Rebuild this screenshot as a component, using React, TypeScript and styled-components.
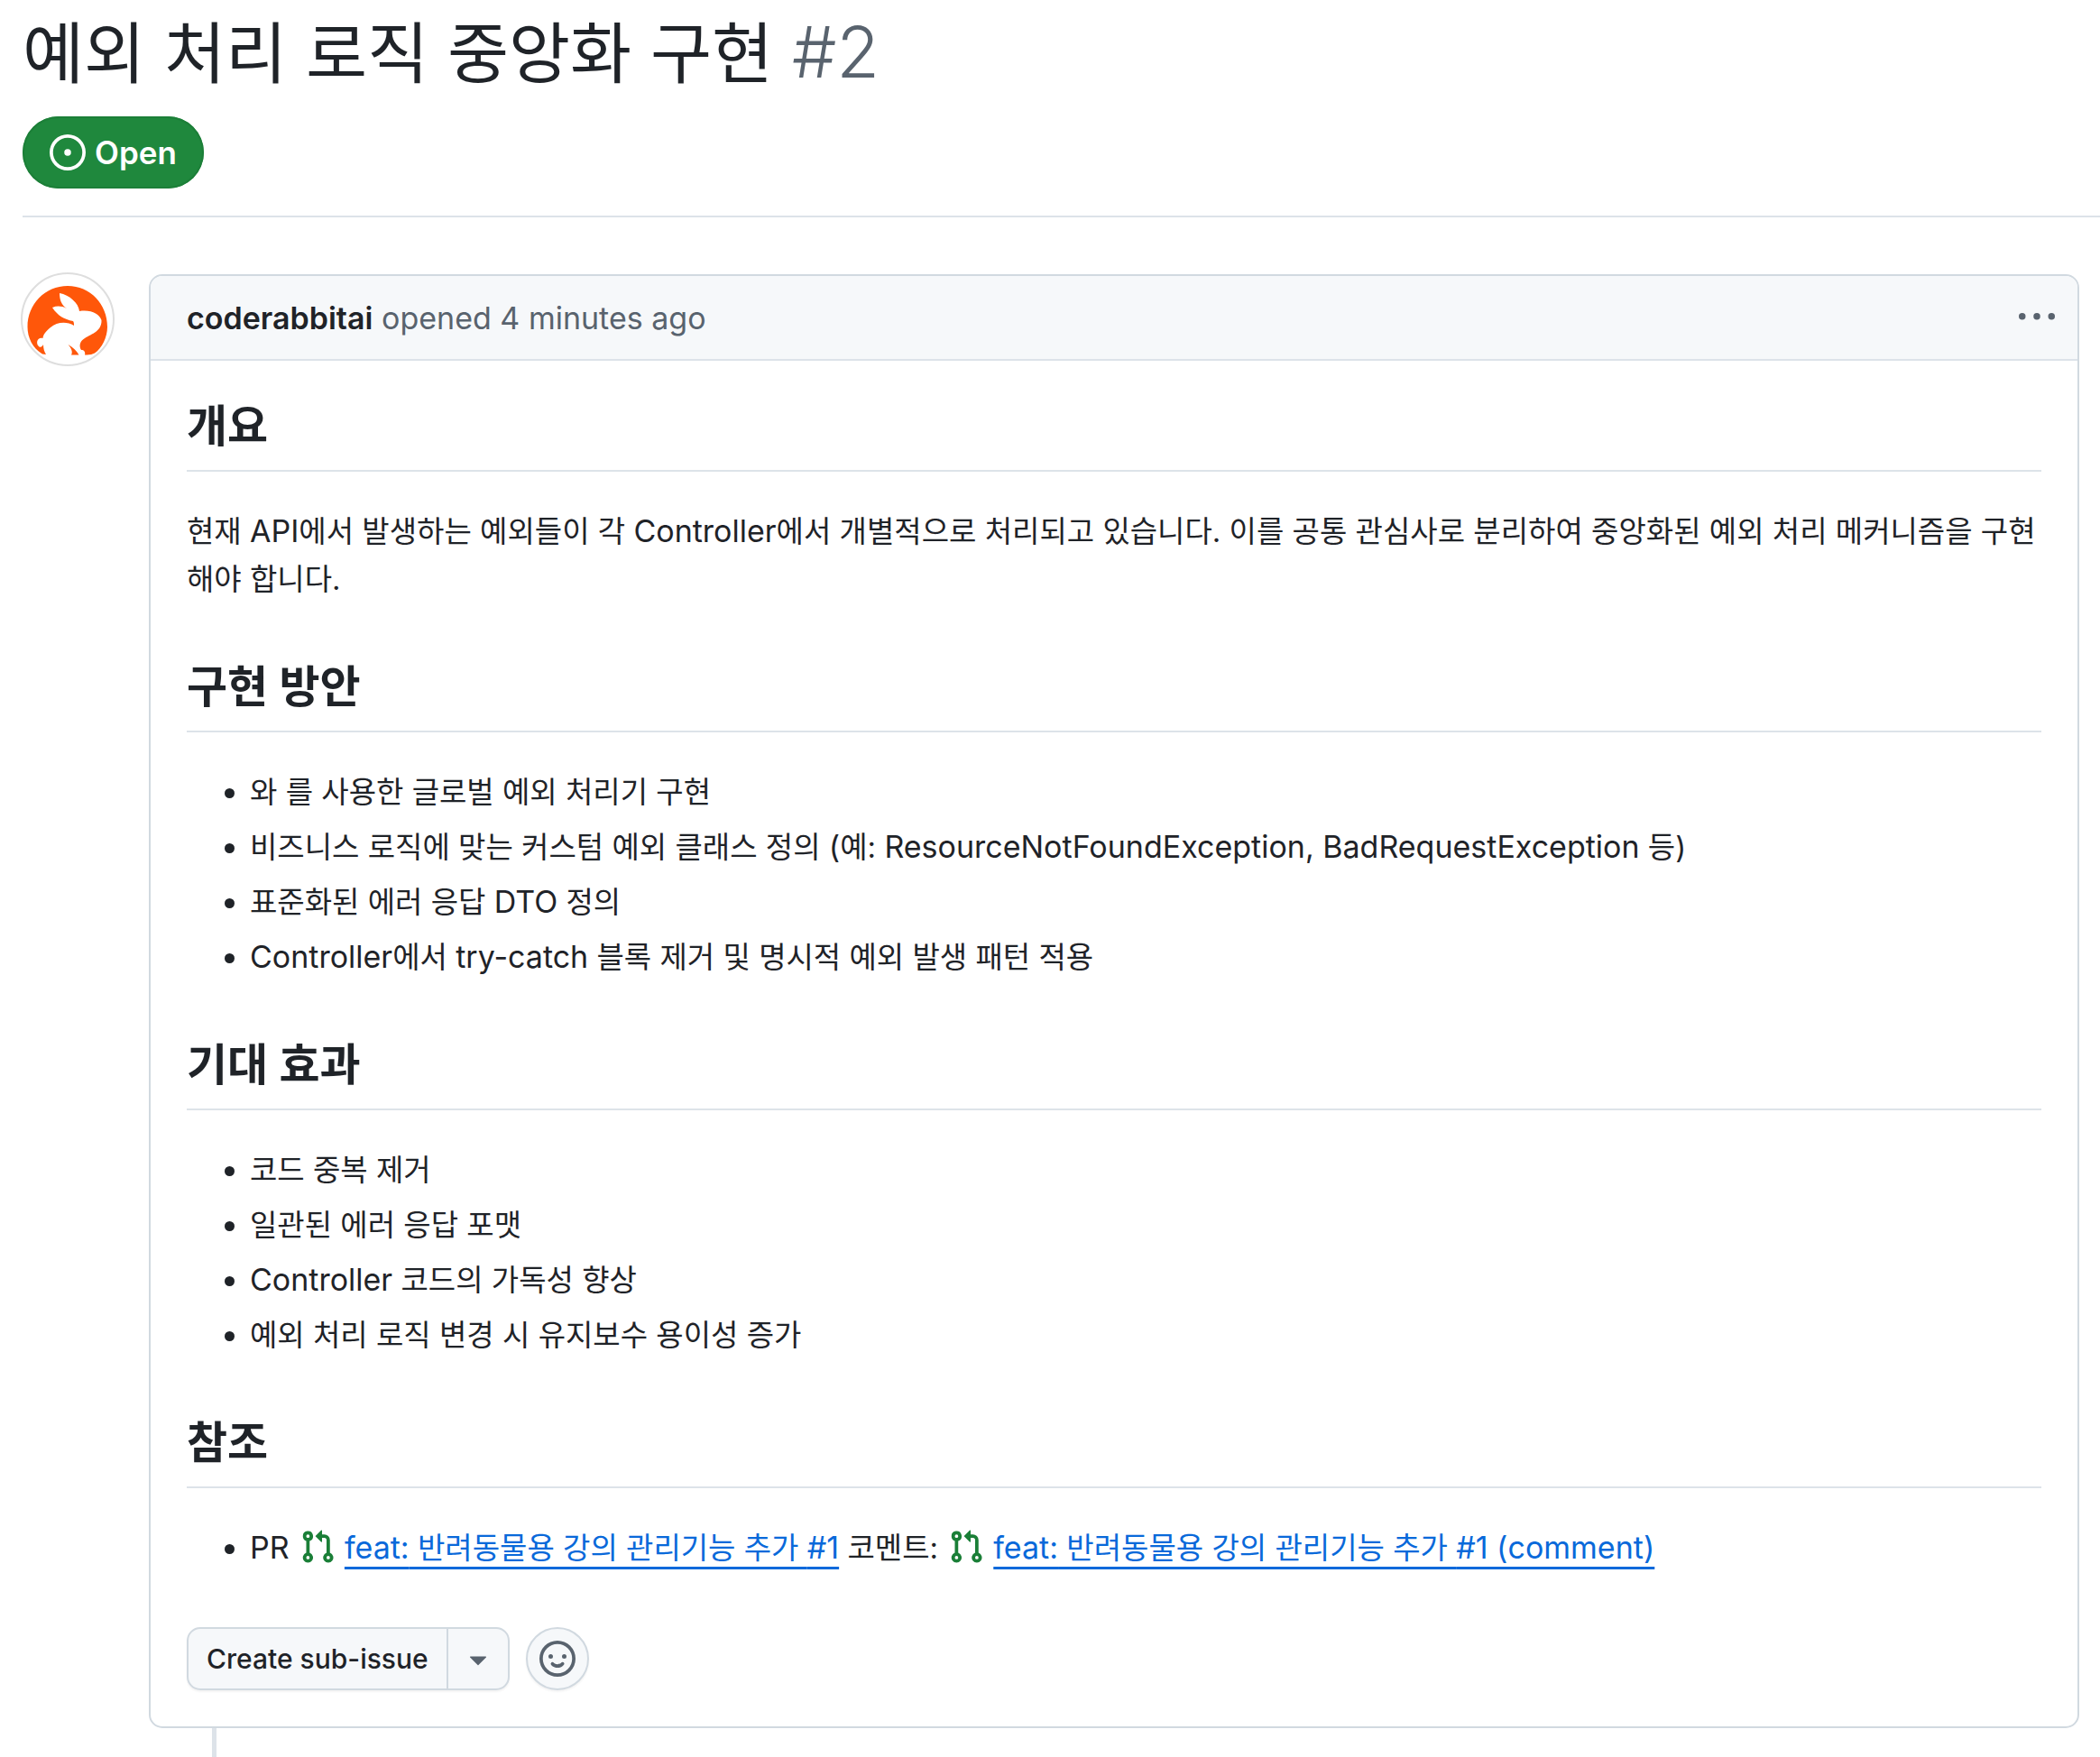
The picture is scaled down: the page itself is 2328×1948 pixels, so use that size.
import React from 'react';
import styled, { createGlobalStyle } from 'styled-components';

const color = {
  text: '#1f2328',
  muted: '#59636e',
  border: '#d1d9e0',
  borderMuted: '#dde3e9',
  subtle: '#f6f8fa',
  link: '#0969da',
  open: '#1f883d',
  pull: '#1a7f37',
};

const GlobalStyle = createGlobalStyle`
  *, *::before, *::after { box-sizing: border-box; }
  body {
    margin: 0;
    background: #fff;
    color: ${color.text};
    font-family: Inter, "Noto Sans CJK KR", sans-serif;
    font-size: 33px;
    line-height: 53px;
  }
  button { font: inherit; color: inherit; margin: 0; cursor: pointer; }
`;

const Page = styled.main`
  display: flex;
  flex-direction: column;
  min-height: 100vh;
`;

const IssueHeader = styled.header`
  margin-left: 25px;
  padding: 9px 0 30px;
  border-bottom: 2px solid ${color.borderMuted};
`;

const Title = styled.h1`
  margin: 0 0 20px;
  font-size: 74px;
  font-weight: 400;
  line-height: 100px;
`;

const IssueNumber = styled.span`
  color: ${color.muted};
  font-size: 78px;
  font-weight: 300;
  line-height: 1;
`;

const StateBadge = styled.span`
  display: inline-flex;
  align-items: center;
  gap: 10px;
  height: 80px;
  padding: 0 30px;
  border-radius: 40px;
  background: ${color.open};
  box-shadow: inset 0 0 0 2px #1c7f38;
  color: #fff;
  font-size: 35px;
  font-weight: 600;
  vertical-align: top;
`;

const Timeline = styled.section`
  display: flex;
  flex: 1;
  align-items: flex-start;
  gap: 38px;
  padding: 61px 23px 0;
`;

const AvatarLink = styled.a`
  display: flex;
  flex: none;
  width: 104px;
  height: 104px;
  border: 2px solid #dedede;
  border-radius: 50%;
  overflow: hidden;
`;

const Thread = styled.div`
  display: flex;
  flex: 1;
  flex-direction: column;
  align-self: stretch;
  min-width: 0;
  padding-top: 2px;
`;

const Card = styled.article`
  border: 2px solid ${color.border};
  border-radius: 15px;
  overflow: hidden;
`;

const Connector = styled.div`
  flex: 1;
  width: 5px;
  min-height: 32px;
  margin-left: 70px;
  background: ${color.borderMuted};
`;

const CardHeader = styled.div`
  display: flex;
  align-items: center;
  justify-content: space-between;
  height: 94px;
  padding: 0 25px 0 40px;
  border-bottom: 2px solid ${color.borderMuted};
  background: ${color.subtle};
  color: ${color.muted};
  font-size: 34px;
`;

const Author = styled.a`
  color: ${color.text};
  font-weight: 600;
  text-decoration: none;
`;

const IconButton = styled.button`
  display: flex;
  padding: 0;
  border: 0;
  background: none;
  color: ${color.muted};
`;

const CardBody = styled.div`
  padding: 40px;
`;

const Heading = styled.h2`
  margin: 60px 0 40px;
  padding-bottom: 15px;
  border-bottom: 2px solid ${color.borderMuted};
  font-size: 49px;
  font-weight: 600;
  line-height: 66px;
  &:first-child { margin-top: 0; }
`;

const Paragraph = styled.p`
  margin: 0;
  word-break: break-all;
`;

const List = styled.ul`
  display: flex;
  flex-direction: column;
  gap: 8px;
  margin: 0;
  padding-left: 70px;
`;

/* Latin words run a step larger than the Hangul beside them. */
const Latin = styled.span`
  font-size: 34px;
  line-height: 1;
`;

const PullLink = styled.a`
  color: ${color.link};
  text-decoration: underline;
  text-decoration-thickness: 3px;
  text-underline-offset: 9px;
  text-decoration-skip-ink: none;
`;

const Actions = styled.div`
  display: flex;
  align-items: center;
  gap: 18px;
  margin-top: 61px;
`;

const ButtonGroup = styled.div`
  display: flex;
  height: 70px;
  border: 2px solid ${color.border};
  border-radius: 15px;
  background: ${color.subtle};
  box-shadow: 0 2px 2px rgba(31, 35, 40, 0.05);
  overflow: hidden;
`;

const GroupButton = styled.button<{ $divided?: boolean }>`
  display: flex;
  align-items: center;
  padding: 0 ${(p) => (p.$divided ? '13px' : '20px')};
  border: 0;
  border-left: ${(p) => (p.$divided ? `2px solid ${color.border}` : '0')};
  background: none;
  font-size: 30px;
  font-weight: 500;
  color: ${(p) => (p.$divided ? color.muted : color.text)};
`;

const ReactionButton = styled.button`
  display: flex;
  align-items: center;
  justify-content: center;
  width: 70px;
  height: 70px;
  padding: 0;
  border: 2px solid ${color.border};
  border-radius: 50%;
  background: ${color.subtle};
  box-shadow: 0 2px 2px rgba(31, 35, 40, 0.05);
  color: ${color.muted};
`;

const Svg = styled.svg`
  display: block;
  flex: none;
  fill: currentColor;
`;

const InlineSvg = styled(Svg)`
  display: inline-block;
  margin: 0 10px 0 2px;
  color: ${color.pull};
  vertical-align: -7px;
`;

const paths = {
  open: 'M8 9.5a1.5 1.5 0 1 0 0-3 1.5 1.5 0 0 0 0 3ZM8 0a8 8 0 1 1 0 16A8 8 0 0 1 8 0ZM1.5 8a6.5 6.5 0 1 0 13 0 6.5 6.5 0 0 0-13 0Z',
  kebab: 'M8 9a1.5 1.5 0 1 0 0-3 1.5 1.5 0 0 0 0 3ZM1.5 9a1.5 1.5 0 1 0 0-3 1.5 1.5 0 0 0 0 3Zm13 0a1.5 1.5 0 1 0 0-3 1.5 1.5 0 0 0 0 3Z',
  pull: 'M1.5 3.25a2.25 2.25 0 1 1 3 2.122v5.256a2.251 2.251 0 1 1-1.5 0V5.372A2.25 2.25 0 0 1 1.5 3.25Zm5.677-.177L9.573.677A.25.25 0 0 1 10 .854V2.5h1A2.5 2.5 0 0 1 13.5 5v5.628a2.251 2.251 0 1 1-1.5 0V5a1 1 0 0 0-1-1h-1v1.646a.25.25 0 0 1-.427.177L7.177 3.427a.25.25 0 0 1 0-.354ZM3.75 2.5a.75.75 0 1 0 0 1.5.75.75 0 0 0 0-1.5Zm0 9.5a.75.75 0 1 0 0 1.5.75.75 0 0 0 0-1.5Zm8.25.75a.75.75 0 1 0 1.5 0 .75.75 0 0 0-1.5 0Z',
  smiley: 'M8 0a8 8 0 1 1 0 16A8 8 0 0 1 8 0ZM1.5 8a6.5 6.5 0 1 0 13 0 6.5 6.5 0 0 0-13 0Zm3.82 1.636a.75.75 0 0 1 1.038.175l.007.009c.103.118.22.222.35.31.264.178.683.37 1.285.37.602 0 1.02-.192 1.285-.371.13-.088.247-.192.35-.31l.007-.008a.75.75 0 0 1 1.222.87c-.06.08-.12.16-.204.242-.16.166-.338.316-.53.445-.63.418-1.37.638-2.127.629-.946 0-1.652-.308-2.126-.63a3.331 3.331 0 0 1-.715-.657.75.75 0 0 1 .169-1.05ZM12 7a1 1 0 1 1-2 0 1 1 0 0 1 2 0ZM5 8a1 1 0 1 1 0-2 1 1 0 0 1 0 2Z',
  caret: 'm4.427 7.427 3.396 3.396a.25.25 0 0 0 .354 0l3.396-3.396A.25.25 0 0 0 11.396 7H4.604a.25.25 0 0 0-.177.427Z',
};

type IconProps = { name: keyof typeof paths };

const Icon = ({ name }: IconProps) => (
  <Svg width="40" height="40" viewBox="0 0 16 16" aria-hidden="true">
    <path d={paths[name]} />
  </Svg>
);

const PullIcon = () => (
  <InlineSvg width="40" height="40" viewBox="0 0 16 16" aria-hidden="true">
    <path d={paths.pull} />
  </InlineSvg>
);

const RabbitLogo = () => (
  <Svg width="100" height="100" viewBox="0 0 100 100" aria-hidden="true">
    <path
      fill="#ff570a"
      d="M22 88.500C11 82 5.500 70 5.500 58.500C5.500 33 25 13 50 13S94 33 94 58.500C94 70 88 82 80 87.500Q76 90 69 89.500C70 86 68 84 65 84C62 79 64 74 69 71C77 66 88 63 87.500 51C85 44 76 39 63 41C62 32 52 23 41 21C41 28 43 34 49 38C43 35 38 35 33 37C39 46 46 50 56 52C57 53 57 55 57 57C49 52 38 53 31 59C25 64 23 67 22.500 71C17 69 14 76 18 80C20 82 22 80 23 78C23 82 24 86 26 89Z"
    />
    <path fill="#ff570a" d="M50.500 78C56 81 60 85 62.500 89.500H54C56 86 54 82 50.500 78Z" />
  </Svg>
);

const Mixed = ({ children }: { children: string }) => (
  <>
    {children
      .split(/([A-Za-z#(][A-Za-z0-9#(),:-]*(?: [A-Za-z0-9#(),:-]+)*)/)
      .map((part, i) => (i % 2 ? <Latin key={i}>{part}</Latin> : part))}
  </>
);

const plans = [
  '와 를 사용한 글로벌 예외 처리기 구현',
  '비즈니스 로직에 맞는 커스텀 예외 클래스 정의 (예: ResourceNotFoundException, BadRequestException 등)',
  '표준화된 에러 응답 DTO 정의',
  'Controller에서 try-catch 블록 제거 및 명시적 예외 발생 패턴 적용',
];

const effects = [
  '코드 중복 제거',
  '일관된 에러 응답 포맷',
  'Controller 코드의 가독성 향상',
  '예외 처리 로직 변경 시 유지보수 용이성 증가',
];

const BulletList = ({ items }: { items: string[] }) => (
  <List>
    {items.map((item) => (
      <li key={item}>
        <Mixed>{item}</Mixed>
      </li>
    ))}
  </List>
);

export default function App() {
  return (
    <Page lang="ko">
      <GlobalStyle />
      <IssueHeader>
        <Title>
          예외 처리 로직 중앙화 구현 <IssueNumber>#2</IssueNumber>
        </Title>
        <StateBadge>
          <Icon name="open" />
          Open
        </StateBadge>
      </IssueHeader>
      <Timeline>
        <AvatarLink href="#coderabbitai" aria-label="coderabbitai">
          <RabbitLogo />
        </AvatarLink>
        <Thread>
          <Card>
            <CardHeader>
              <div>
                <Author href="#coderabbitai">coderabbitai</Author> opened 4 minutes ago
              </div>
              <IconButton type="button" aria-label="Issue actions">
                <Icon name="kebab" />
              </IconButton>
            </CardHeader>
            <CardBody>
              <Heading>개요</Heading>
              <Paragraph>
                <Mixed>
                  현재 API에서 발생하는 예외들이 각 Controller에서 개별적으로 처리되고 있습니다. 이를 공통
                  관심사로 분리하여 중앙화된 예외 처리 메커니즘을 구현해야 합니다.
                </Mixed>
              </Paragraph>
              <Heading>구현 방안</Heading>
              <BulletList items={plans} />
              <Heading>기대 효과</Heading>
              <BulletList items={effects} />
              <Heading>참조</Heading>
              <List>
                <li>
                  <Latin>PR</Latin> <PullIcon />
                  <PullLink href="#pull-1">
                    <Mixed>feat: 반려동물용 강의 관리기능 추가 #1</Mixed>
                  </PullLink>{' '}
                  코멘트: <PullIcon />
                  <PullLink href="#pull-1-comment">
                    <Mixed>feat: 반려동물용 강의 관리기능 추가 #1 (comment)</Mixed>
                  </PullLink>
                </li>
              </List>
              <Actions>
                <ButtonGroup>
                  <GroupButton type="button">Create sub-issue</GroupButton>
                  <GroupButton type="button" $divided aria-label="More sub-issue options">
                    <Icon name="caret" />
                  </GroupButton>
                </ButtonGroup>
                <ReactionButton type="button" aria-label="Add reaction">
                  <Icon name="smiley" />
                </ReactionButton>
              </Actions>
            </CardBody>
          </Card>
          <Connector />
        </Thread>
      </Timeline>
    </Page>
  );
}
